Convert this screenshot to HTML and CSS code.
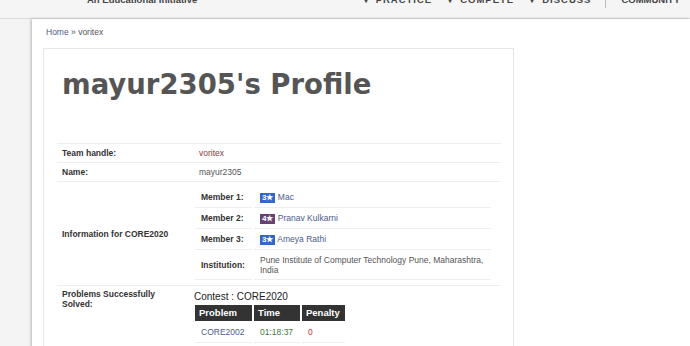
FILE: index.html
```html
<!DOCTYPE html>
<html lang="en">
<head>
  <meta charset="UTF-8" />
  <title>mayur2305's Profile</title>
  <link rel="stylesheet" href="styles.css">
</head>
<body>
  <header class="topbar">
    <div class="tagline">An Educational Initiative</div>
    <nav class="menu">
      <span class="menu-item"><span class="caret">&#9662;</span>PRACTICE</span>
      <span class="menu-item"><span class="caret">&#9662;</span>COMPETE</span>
      <span class="menu-item"><span class="caret">&#9662;</span>DISCUSS</span>
      <span class="menu-sep"></span>
      <span class="menu-item last">COMMUNITY</span>
    </nav>
  </header>

  <div class="page">
    <div class="breadcrumb"><a href="#">Home</a> &raquo; voritex</div>

    <div class="profile-box">
      <h1 class="profile-title">mayur2305's Profile</h1>

      <table class="profile-table">
        <tr>
          <td class="label">Team handle:</td>
          <td class="value"><a class="handle" href="#">voritex</a></td>
        </tr>
        <tr>
          <td class="label">Name:</td>
          <td class="value">mayur2305</td>
        </tr>
        <tr>
          <td class="label">Information for CORE2020</td>
          <td class="value nested-cell">
            <table class="members">
              <tr>
                <td class="member-label">Member 1:</td>
                <td><span class="rating r3">3&#9733;</span> <a href="#">Mac</a></td>
              </tr>
              <tr>
                <td class="member-label">Member 2:</td>
                <td><span class="rating r4">4&#9733;</span> <a href="#">Pranav Kulkarni</a></td>
              </tr>
              <tr>
                <td class="member-label">Member 3:</td>
                <td><span class="rating r3">3&#9733;</span> <a href="#">Ameya Rathi</a></td>
              </tr>
              <tr>
                <td class="member-label">Institution:</td>
                <td class="institution">Pune Institute of Computer Technology Pune, Maharashtra, India</td>
              </tr>
            </table>
          </td>
        </tr>
        <tr>
          <td class="label top">Problems Successfully Solved:</td>
          <td class="value nested-cell">
            <div class="contest-name">Contest : CORE2020</div>
            <table class="solved">
              <tr>
                <th class="col-problem">Problem</th>
                <th class="col-time">Time</th>
                <th class="col-penalty">Penalty</th>
              </tr>
              <tr>
                <td><a href="#">CORE2002</a></td>
                <td class="time">01:18:37</td>
                <td class="penalty">0</td>
              </tr>
            </table>
          </td>
        </tr>
      </table>
    </div>
  </div>
</body>
</html>
```

FILE: styles.css
```css
html, body {
  margin: 0;
  height: 100%;
  overflow: hidden;
}

body {
  background: #f4f4f4;
  font-family: "Liberation Sans", Arial, sans-serif;
  color: #555;
}

a {
  color: #4b5b8c;
  text-decoration: none;
}

/* top bar, scrolled so only the bottom of it shows */
.topbar {
  height: 18px;
  background: #f5f5f5;
  border-bottom: 1px solid #dcdcdc;
  overflow: hidden;
  display: flex;
  font-size: 9.5px;
  font-weight: bold;
  color: #444;
  line-height: 12px;
}

.tagline {
  margin: -6px 0 0 87px;
}

.menu {
  display: flex;
  margin: -6px 0 0 auto;
  padding-right: 10px;
}

.menu-item {
  margin-left: 16px;
  letter-spacing: 1px;
}

.menu-item.last {
  margin-left: 0;
  letter-spacing: 0;
}

.caret {
  margin-right: 7px;
  font-size: 8px;
}

.menu-sep {
  width: 1px;
  height: 14px;
  background: #bbb;
  margin: 0 15px 0 14px;
}

.page {
  margin-left: 32px;
  height: 100%;
  background: #fff;
  box-shadow: -1px 0 3px rgba(0, 0, 0, 0.25);
  padding: 7px 0 0 11px;
}

.breadcrumb {
  font-size: 8.5px;
  line-height: 12px;
  padding-left: 3px;
  color: #555;
}

.profile-box {
  margin-top: 10px;
  width: 469px;
  height: 400px;
  border: 1px solid #e6e6e6;
}

.profile-title {
  margin: 22px 0 45px 18px;
  font-family: "DejaVu Sans", Verdana, sans-serif;
  font-size: 27.5px;
  line-height: 27px;
  font-weight: bold;
  color: #555;
}

.profile-table {
  margin-left: 13px;
  width: 444px;
  border-collapse: collapse;
  font-size: 8.5px;
}

.profile-table > tbody > tr > td {
  border-top: 1px solid #eee;
  padding: 3px 4px 3px 5px;
  line-height: 12px;
}

.label {
  width: 124px;
  font-weight: bold;
  color: #333;
}

.label.top {
  vertical-align: top;
  padding-top: 4px;
  line-height: 9.5px !important;
  padding-right: 20px !important;
}

.handle {
  color: #8b3a3a;
}

.profile-table > tbody > tr > td.nested-cell {
  padding: 5px 8px 4px 0;
}

.members {
  width: 300px;
  border-collapse: separate;
  border-spacing: 2px 1px;
  margin-left: -1px;
}

.members td {
  border-bottom: 1px solid #eee;
  padding: 4px 6px;
  line-height: 11px;
}

.member-label {
  width: 45px;
  font-weight: bold;
  color: #333;
}

.members td.institution {
  line-height: 10px;
  padding: 4px 6px 4px;
}

.rating {
  display: inline-block;
  padding: 0 2px;
  font-size: 8px;
  line-height: 10px;
  font-weight: bold;
  color: #fff;
}

.rating.r3 {
  background: #3366cc;
}

.rating.r4 {
  background: #684273;
}

.contest-name {
  font-size: 10px;
  line-height: 12px;
  color: #222;
}

.solved {
  border-collapse: separate;
  border-spacing: 2px 0;
  margin: 2px 0 0 -1px;
}

.solved th {
  background: #333;
  color: #fff;
  font-size: 9.5px;
  text-align: left;
  line-height: 16px;
  padding: 0 4px;
}

.col-problem {
  width: 49px;
}

.col-time {
  width: 38px;
}

.col-penalty {
  width: 35px;
}

.solved td {
  padding: 5px 6px 4px;
  line-height: 12px;
  border-bottom: 1px solid #eee;
}

.time {
  color: #3a7a3a;
}

.penalty {
  color: #cc3333;
}
```
